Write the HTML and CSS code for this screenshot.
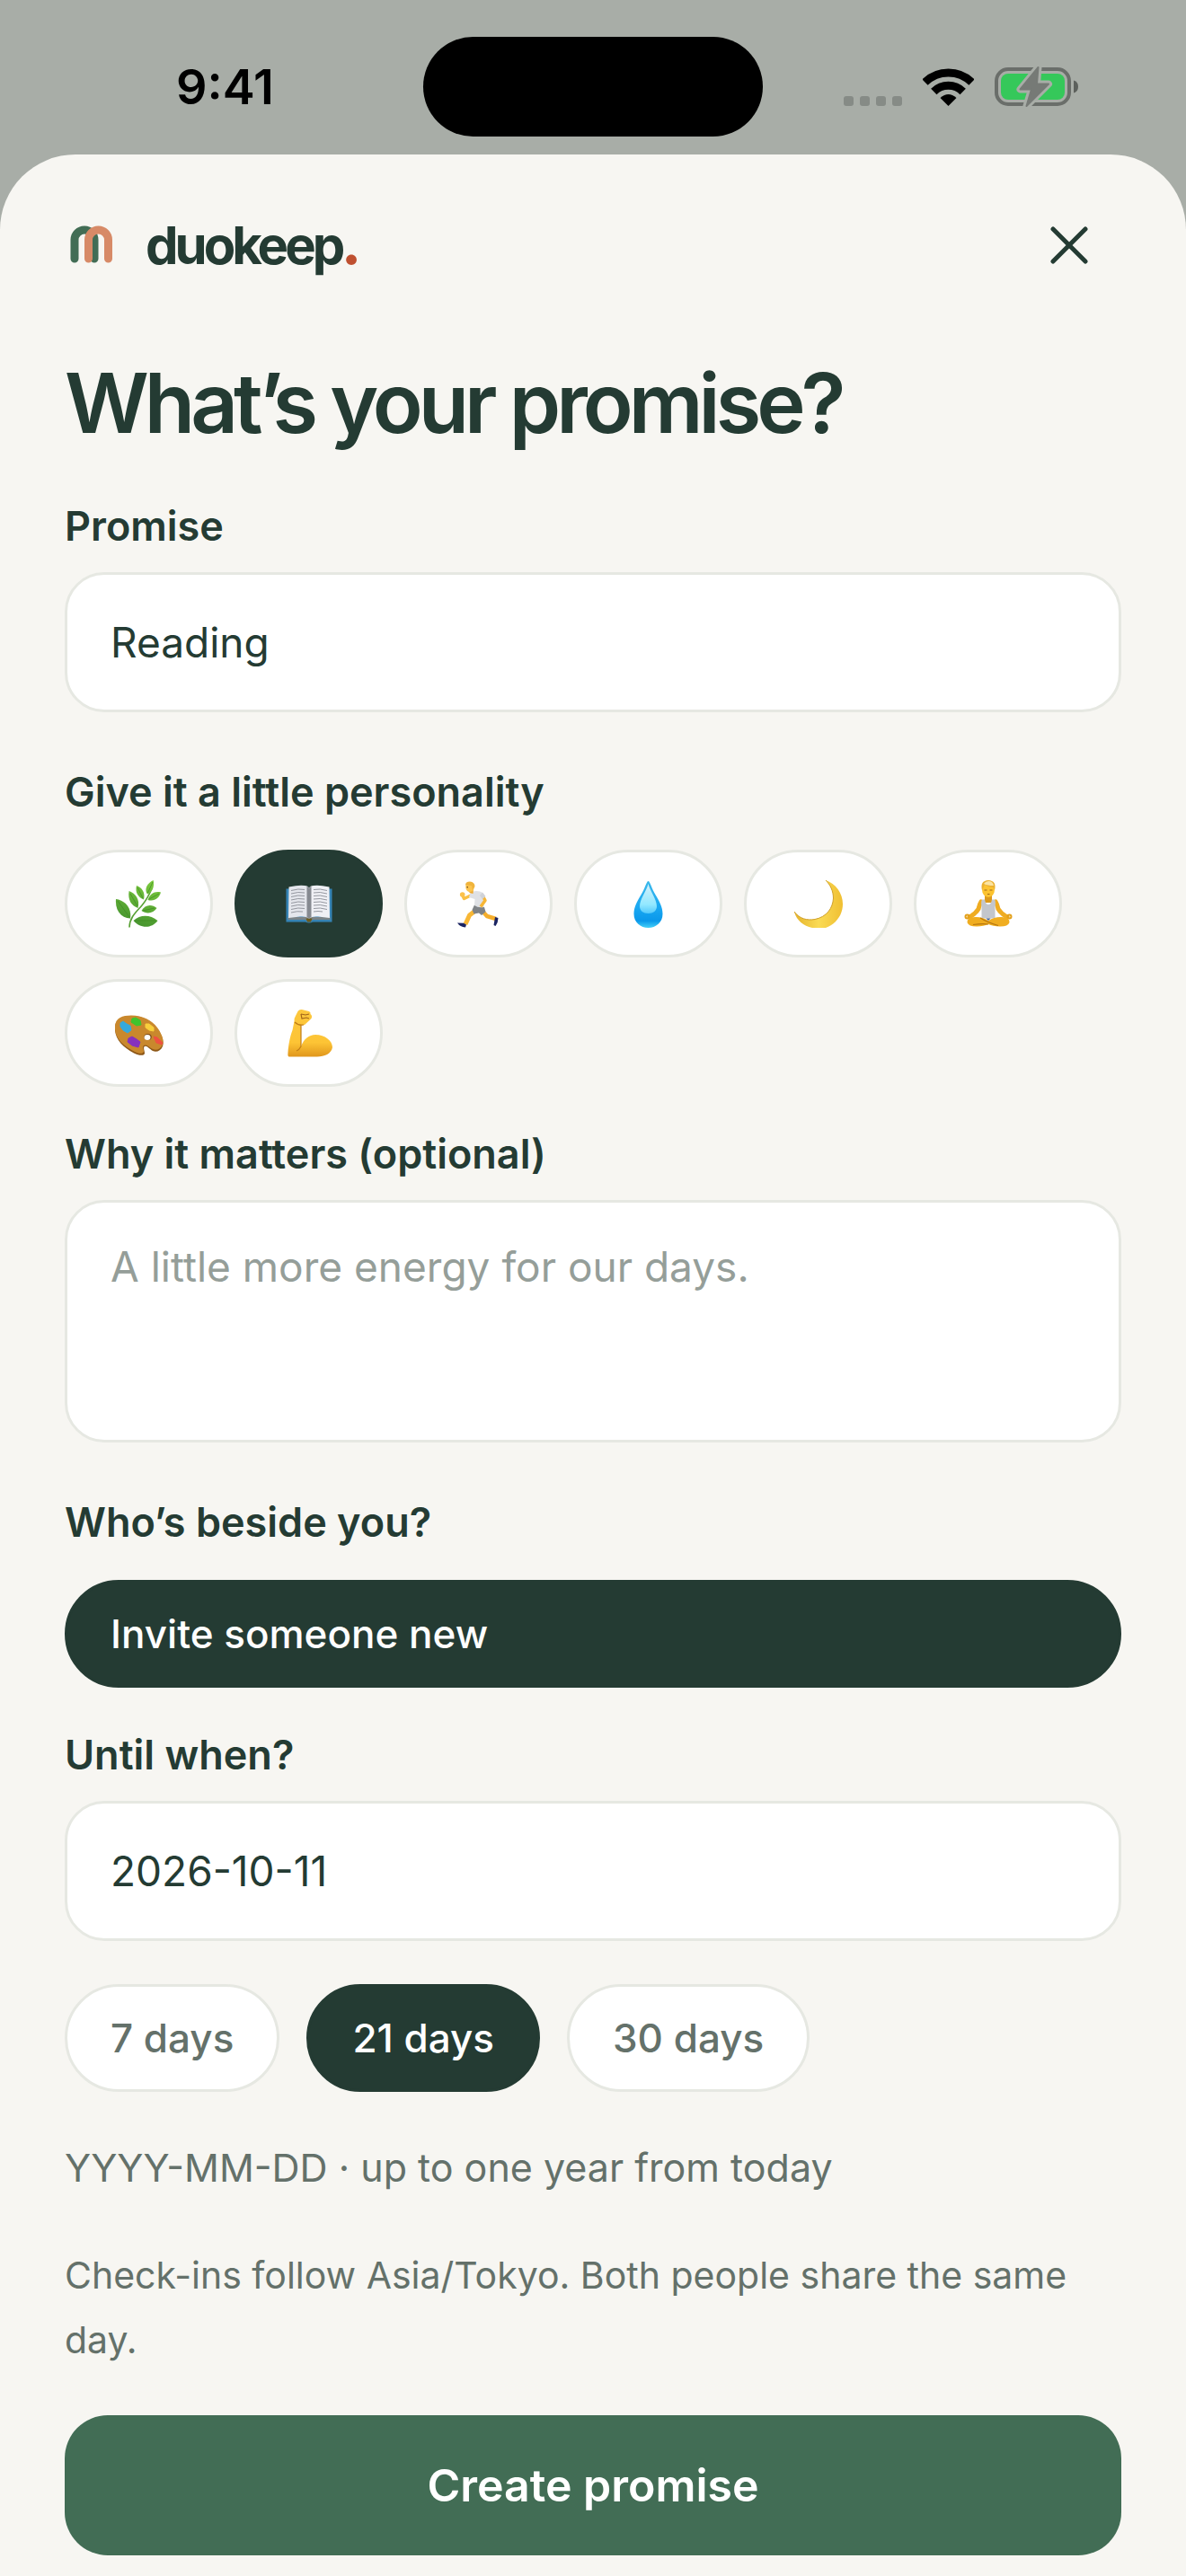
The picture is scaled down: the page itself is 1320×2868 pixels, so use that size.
FILE: index.html
```html
<!DOCTYPE html>
<html lang="en">
<head>
  <meta charset="UTF-8" />
  <meta name="viewport" content="width=device-width, initial-scale=1.0" />
  <title>duokeep</title>
  <link rel="stylesheet" href="styles.css">
</head>
<body>
  <div class="status">
    <span class="time">9:41</span>
    <span class="island"></span>
    <div class="signals">
      <svg class="dots" viewBox="0 0 66 48" aria-hidden="true">
        <rect x="0" y="34" width="11" height="11" rx="3" />
        <rect x="18" y="34" width="11" height="11" rx="3" />
        <rect x="36" y="34" width="11" height="11" rx="3" />
        <rect x="54" y="34" width="11" height="11" rx="3" />
      </svg>
      <svg class="wifi" viewBox="0 0 57 48" aria-hidden="true">
        <path d="M2.5 18.5A37.3 37.3 0 0 1 54.5 18.5" fill="none" stroke="#000" stroke-width="9" />
        <path d="M12.3 29A23 23 0 0 1 44.7 29" fill="none" stroke="#000" stroke-width="9" />
        <path d="M28.5 45L19.5 36Q28.5 28 37.5 36Z" />
      </svg>
      <svg class="battery" viewBox="0 0 94 50" aria-hidden="true">
        <rect x="2" y="5" width="81" height="39" rx="13" fill="none" stroke="#6a6e6a" stroke-width="4" />
        <rect x="7" y="10" width="71" height="29" rx="8" fill="#35c85a" />
        <path d="M88 17.5Q93 19 93 24.5T88 31.5Z" fill="#5c605c" />
        <path d="M48.5 3L28.5 27.5H41L35.5 46L60 21.5H47Z" fill="#a8ada7" stroke="#a8ada7" stroke-width="8" stroke-linejoin="round" />
        <path d="M48.5 3L28.5 27.5H41L35.5 46L60 21.5H47Z" fill="#767a76" stroke="#767a76" stroke-width="2" stroke-linejoin="round" />
      </svg>
    </div>
  </div>

  <main class="sheet">
    <header class="top">
      <div class="brand">
        <svg viewBox="0 0 60 60" aria-hidden="true">
          <path d="M11 45V24a11 11 0 0 1 22 0V45" stroke="#426d55" />
          <path d="M26.5 45V24a11 11 0 0 1 22 0V45" stroke="#d78a67" />
        </svg>
        <span class="name">duokeep<b>.</b></span>
      </div>
      <button class="close" type="button" aria-label="Close">
        <svg viewBox="0 0 42 42"><path d="M3 3L39 39M39 3L3 39" /></svg>
      </button>
    </header>

    <h1>What’s your promise?</h1>

    <form>
      <div class="field">
        <label for="promise">Promise</label>
        <input class="box" id="promise" type="text" value="Reading">
      </div>

      <fieldset class="group">
        <legend>Give it a little personality</legend>
        <div class="icons">
          <label class="chip icon">
            <input type="radio" name="icon" value="leaf" aria-label="Leaf">
            <svg viewBox="0 0 54 54">
              <path d="M16 53.5C16 42 25 35 30 29S37 20 41 10" fill="none" stroke="#58a034" stroke-width="1.6" />
              <g fill="url(#leafGreen)">
                <path d="M1 22C10 23 19 31 17 43.5C7 43 0 35 1 22Z" />
                <path d="M15.6 13C23 16 28 22 25.5 32C18 29 14 23 15.6 13Z" />
                <path d="M24 7C30 9 34 15 32 22.5C26 20 22 15 24 7Z" />
                <path d="M42.7 1C44 8 42 14 36 16.5C32 11 36 4 42.7 1Z" />
                <path d="M51 14.5C49 21 44 25 36.5 23C39 16 44 13 51 14.5Z" />
                <path d="M46.5 32C43 38 35 39 29.5 35C33 28 41 27 46.5 32Z" />
                <path d="M47.5 46C40 56 27 54 20.5 46C28 39 39 39 47.5 46Z" />
              </g>
              <g fill="none" stroke="#3f8a27" stroke-width="0.7">
                <path d="M3 24L16 42M17 16L25 30M25 9L31 21M42 3L36.5 15M49 16L38 22M44 32L31 35M45 46H22" />
              </g>
              <defs>
                <linearGradient id="leafGreen" gradientUnits="userSpaceOnUse" x1="40" y1="0" x2="22" y2="54">
                  <stop offset="0" stop-color="#7ccb3d" />
                  <stop offset="1" stop-color="#43912e" />
                </linearGradient>
              </defs>
            </svg>
          </label>
          <label class="chip icon">
            <input type="radio" name="icon" value="book" aria-label="Book" checked>
            <svg viewBox="0 0 54 54">
              <path d="M1.5 10.5H52.5V47.5H31Q27 49.5 23 47.5H1.5Z" fill="#3583b5" />
              <path d="M3.5 42H50.5V45H31Q27 48 23 45H3.5Z" fill="#7b8489" />
              <path d="M23.5 43.5H30.5L29 47.5H25Z" fill="#6b5b1e" />
              <path d="M4.5 8.5Q16 6 22 7Q26 7 27 10V43.5Q24 41 17 41.5L4 43Z" fill="#e4e6ec" />
              <path d="M49.5 8.5Q38 6 32 7Q28 7 27 10V43.5Q30 41 37 41.5L50 43Z" fill="#eff0f5" />
              <path d="M24.5 8Q27 8 27 11Q27 8 29.5 8V42L27 43.5L24.5 42Z" fill="#868a91" />
              <g fill="none" stroke="#94979f" stroke-width="1">
                <path d="M7 12.5Q15 10 22 11.5M7 16Q15 13.5 22 15M7 19.5Q15 17 22 18.5M7 23Q15 20.5 22 22M7 26.5Q15 24 22 25.5M7 30Q15 27.5 22 29M7 33.5Q15 31 22 32.5M7 37Q14 35 20 36" />
                <path d="M32 11.5Q39 10 47 12.5M32 15Q39 13.5 47 16M32 18.5Q39 17 47 19.5M32 22Q39 20.5 47 23M32 25.5Q39 24 47 26.5M32 29Q39 27.5 47 30M32 32.5Q39 31 47 33.5M32 36Q37 35 42 36" />
              </g>
            </svg>
          </label>
          <label class="chip icon">
            <input type="radio" name="icon" value="run" aria-label="Running">
            <svg viewBox="0 0 54 54">
              <path d="M31 35.5L36 41L46 44" fill="none" stroke="#f5ae2c" stroke-width="4.5" stroke-linejoin="round" />
              <path d="M23 35L16.5 40L12 50" fill="none" stroke="#f8b735" stroke-width="5" stroke-linejoin="round" />
              <path d="M3 48.5L10 48.8L13 50.5L12 53.5Q6 53 3 48.5Z" fill="#1b2462" />
              <path d="M45 42L48.5 43Q48.5 48 45.5 52L43.5 51Z" fill="#1b2462" />
              <path d="M20 17L10.5 21.5L8.5 17" fill="none" stroke="#f9bf42" stroke-width="3.5" stroke-linejoin="round" />
              <circle cx="8.7" cy="17" r="2.8" fill="#fbc14b" />
              <path d="M22 28.5L33 31L34.5 36L30 40L27 37.5L21.5 38.5L19.5 34Z" fill="#7f8387" />
              <path d="M17.5 15Q22 12 28 13.5Q33 15 33.5 19L32 24L32.5 31Q26 32 22 29L22.5 22L16 20Z" fill="#dfe1e5" />
              <path d="M31 18L34 23.5L29 30.5" fill="none" stroke="#f7b635" stroke-width="3.5" stroke-linejoin="round" />
              <path d="M31 14.5L34.5 19L31 22L28 18Z" fill="#d0d2d7" />
              <path d="M16 11L21 10.5L20.5 16L16.5 15Z" fill="#efa92f" />
              <ellipse cx="17" cy="8.5" rx="4.7" ry="5.5" fill="#fcc44f" />
              <path d="M12 6.5Q12 2.5 17 2.5Q22.500 3 22.500 8L20 12L19 7Z" fill="#f0b43c" />
              <circle cx="14.2" cy="8.7" r="0.8" fill="#5c3a14" />
            </svg>
          </label>
          <label class="chip icon">
            <input type="radio" name="icon" value="water" aria-label="Water">
            <svg viewBox="0 0 54 54">
              <defs>
                <linearGradient id="dropBlue" x1="0" y1="0" x2="0" y2="1">
                  <stop offset="0" stop-color="#3bb8ea" />
                  <stop offset="0.55" stop-color="#1ba9f2" />
                  <stop offset="0.85" stop-color="#0a98ea" />
                  <stop offset="1" stop-color="#45d1f8" />
                </linearGradient>
                <linearGradient id="dropShine" x1="0" y1="0" x2="0" y2="1">
                  <stop offset="0" stop-color="#d6f1fb" />
                  <stop offset="0.7" stop-color="#92e8ff" />
                  <stop offset="1" stop-color="#53c9fb" />
                </linearGradient>
              </defs>
              <path d="M26.5 2C28.5 2 30 10 35 18C39 25 42.5 31 42.5 38.5C42.5 48 35 54 26.5 54S10.5 48 10.5 38.5C10.5 31 14 25 18 18C23 10 24.5 2 26.5 2Z" fill="url(#dropBlue)" />
              <path d="M26.5 5C28 12 36 22 36 30C36 35 32 38 26.5 38S17 35 17 30C17 22 25 12 26.5 5Z" fill="url(#dropShine)" />
            </svg>
          </label>
          <label class="chip icon">
            <input type="radio" name="icon" value="moon" aria-label="Moon">
            <svg viewBox="0 0 54 54">
              <defs>
                <linearGradient id="moonGold" x1="0" y1="0" x2="1" y2="0">
                  <stop offset="0" stop-color="#e5b32b" />
                  <stop offset="0.5" stop-color="#fadb55" />
                  <stop offset="1" stop-color="#f0bf32" />
                </linearGradient>
              </defs>
              <path d="M35 1C46 5 54 15 54 27.5C54 40 46 50 35 54H20C10 52 2 45 0 36C6 44 14 46 23 44.5C36 42 43 32 43.5 21C43.5 13 40 6 35 1Z" fill="url(#moonGold)" />
              <path d="M0 36C6 44 14 46 23 44.5C36 42 43 32 43.5 21C43.5 13 40 6 35 1" fill="none" stroke="#cf9f29" stroke-width="1" />
            </svg>
          </label>
          <label class="chip icon">
            <input type="radio" name="icon" value="calm" aria-label="Meditation">
            <svg viewBox="0 0 54 54">
              <path d="M19 25Q17 28 16 33Q13 38 6 42M35 25Q37 28 38 33Q41 38 48 42" fill="none" stroke="#efac22" stroke-width="5" stroke-linecap="round" />
              <circle cx="3.5" cy="41.5" r="2" fill="none" stroke="#e3a01b" stroke-width="2" />
              <circle cx="50.5" cy="41.5" r="2" fill="none" stroke="#e3a01b" stroke-width="2" />
              <path d="M23 17H31V26H23Z" fill="#dc991b" />
              <path d="M20 22.500H23Q24 28 27 28T31 22.500H34Q35.500 25 34.500 31V43.500H19.500V31Q18.500 25 20 22.500Z" fill="#c3c6cc" />
              <path d="M3.500 48Q3 42 12 42Q20 41.500 27 46Q34 41.500 42 42Q51 42 50.500 48Q49 52.500 40 52.500Q32 52 27 50Q22 52 14 52.500Q5 52.500 3.500 48Z" fill="#f0ad20" />
              <path d="M18 43Q26 48 38 51.500M27 50Q20 49 10 50.500" fill="none" stroke="#b5750f" stroke-width="1.2" />
              <path d="M24.500 43.500H29.500L27 46Z" fill="#46659b" />
              <ellipse cx="27" cy="11.500" rx="7" ry="8.500" fill="#fcc32f" />
              <path d="M20 12Q17.500 1.500 27 1Q36.500 1.500 34 12L32.500 9L27 8L23 6L21.500 9Z" fill="#eab030" />
              <path d="M22 5Q24 2 28 2Q32 2.500 33 7Q26 7 22 5Z" fill="#fbe3a0" />
              <path d="M22.500 12H25.500M28.500 12H31.500M26 16.500H28.500" stroke="#a0661a" stroke-width="1" />
            </svg>
          </label>
          <label class="chip icon">
            <input type="radio" name="icon" value="art" aria-label="Art">
            <svg viewBox="0 0 54 54">
              <path d="M0 24C-1 12 7 8 18 8C31 8 41 14 47 22C52 29 55 36 53 42C51 47 46 49 42 47C38 45 36 41 33 42C31 43 33 47 33 50C32 53 26 52 21 49.5C9 43 1 35 0 24Z" fill="#8d5717" />
              <path d="M0 23C-1 11 7 7.5 18 7.5C31 7.5 41 13 47 21C52 28 55 35 53 40C51 45 46 47 42 45C38 43 35 39 32 41C30 43 32 45 32 48C30 51 26 50 21 47.5C9 41 1 34 0 23Z" fill="#c9882d" />
              <ellipse cx="36.5" cy="31.5" rx="4.2" ry="3.6" fill="#7b4a17" />
              <ellipse cx="36" cy="32" rx="3.5" ry="3" fill="#fff" />
              <path d="M6 16L9 14L13 17L17 19L18 24L14 27L9 24L6 20Z" fill="#35a9dc" stroke="#35a9dc" stroke-linejoin="round" />
              <path d="M19 11L23 10L28 13L29 18L24 19L18 15Z" fill="#3fc42d" stroke="#3fc42d" stroke-linejoin="round" />
              <path d="M34 17L38 17L43 21L43 25L38 24L34 21Z" fill="#f8cf3c" stroke="#f8cf3c" stroke-linejoin="round" />
              <path d="M43 31L47 32L53 38L52 40L46 38Z" fill="#ee5240" stroke="#ee5240" stroke-linejoin="round" />
              <path d="M15 33L19 31L24 34L28 37L26 43L19 41L14 37Z" fill="#8632bd" stroke="#8632bd" stroke-linejoin="round" />
            </svg>
          </label>
          <label class="chip icon">
            <input type="radio" name="icon" value="strength" aria-label="Strength">
            <svg viewBox="0 0 54 54">
              <defs>
                <linearGradient id="armGold" x1="0" y1="0" x2="0" y2="1">
                  <stop offset="0" stop-color="#fcc73d" />
                  <stop offset="0.7" stop-color="#fdc435" />
                  <stop offset="1" stop-color="#e0961c" />
                </linearGradient>
              </defs>
              <path d="M10.500 14Q10 11 12 8L14.500 3Q16 0.500 19 1L27 3Q29 4 28.500 6Q31 8 29.500 11L22 18H18V42C21 34 27 29 34 29C45 29 53 36 53 43C52 50 44 53.500 36 53.500H4.500Q3 53 3.500 49C4 40 6 30 8.500 24Z" fill="url(#armGold)" />
              <path d="M11 15Q15 19 21 18M18 18.500V42Q16 46 13 47" fill="none" stroke="#c07d16" stroke-width="1.2" />
              <path d="M18 6L23 7L27 6M18 6L19 11L24 10L27 11" fill="none" stroke="#a3661a" stroke-width="1.2" />
            </svg>
          </label>
        </div>
      </fieldset>

      <div class="field">
        <label for="why">Why it matters (optional)</label>
        <textarea class="box" id="why" placeholder="A little more energy for our days."></textarea>
      </div>

      <fieldset class="group">
        <legend>Who’s beside you?</legend>
        <button class="chip invite" type="button">Invite someone new</button>
      </fieldset>

      <div class="field until">
        <label for="until">Until when?</label>
        <input class="box" id="until" type="text" value="2026-10-11">
      </div>

      <div class="days">
        <label class="chip"><input type="radio" name="days" value="7">7 days</label>
        <label class="chip"><input type="radio" name="days" value="21" checked>21 days</label>
        <label class="chip"><input type="radio" name="days" value="30">30 days</label>
      </div>

      <p class="hint">YYYY-MM-DD · up to one year from today</p>
      <p class="note">Check-ins follow Asia/Tokyo. Both people share the same day.</p>

      <button class="submit" type="submit">Create promise</button>
    </form>
  </main>
</body>
</html>
```

FILE: styles.css
```css
* {
  box-sizing: border-box;
}

body {
  font-family: Inter, "Noto Sans", sans-serif;
  margin: 0;
  min-height: 100vh;
  display: flex;
  flex-direction: column;
  background: #a8ada7;
  color: #243b33;
}

/* status bar */
.status {
  display: grid;
  grid-template-columns: 1fr 378px 1fr;
  align-items: center;
  justify-items: center;
  padding: 41px 30px 20px;
}

.time {
  font-size: 54px;
  font-weight: 600;
  line-height: 60px;
  color: #000;
}

.island {
  width: 100%;
  height: 111px;
  border-radius: 56px;
  background: #000;
}

.signals {
  display: flex;
  align-items: center;
}

.dots {
  width: 66px;
  height: 48px;
  fill: #868b86;
  margin-right: 22px;
}

.wifi {
  width: 57px;
  height: 48px;
  margin-right: 23px;
}

.battery {
  width: 94px;
  height: 50px;
}

/* sheet */
.sheet {
  flex: 1;
  background: #f7f6f2;
  border-radius: 84px 84px 0 0;
  padding: 43px 72px 23px;
}

.top {
  display: flex;
  justify-content: space-between;
  align-items: center;
}

.brand {
  display: flex;
  align-items: center;
  gap: 30px;
}

.brand svg {
  width: 60px;
  height: 60px;
  fill: none;
  stroke-width: 9;
  stroke-linecap: round;
}

.name {
  font-size: 58px;
  font-weight: 700;
  line-height: 72px;
  letter-spacing: -4px;
}

.name b {
  color: #bf5030;
}

.close {
  width: 116px;
  height: 116px;
  padding: 0;
  border: none;
  background: none;
  display: grid;
  place-items: center;
  cursor: pointer;
}

.close svg {
  width: 42px;
  height: 42px;
  fill: none;
  stroke: #243b33;
  stroke-width: 5;
  stroke-linecap: round;
}

h1 {
  font-size: 92px;
  font-weight: 600;
  line-height: 110px;
  letter-spacing: -5px;
  margin: 63px 0 52px;
}

/* form */
.field label,
legend {
  display: block;
  padding: 0;
  font-size: 45px;
  font-weight: 600;
  line-height: 60px;
}

.field {
  margin-bottom: 59px;
}

.field label {
  margin-bottom: 21px;
}

.until {
  margin-bottom: 48px;
}

.group {
  border: none;
  margin: 0 0 45px;
  padding: 0;
  min-width: 0;
}

legend {
  margin-bottom: 34px;
}

.box {
  display: block;
  width: 100%;
  height: 156px;
  padding: 0 48px;
  border: 3px solid #e6e8e2;
  border-radius: 44px;
  background: #fff;
  color: #243b33;
  font-family: inherit;
  font-size: 46px;
  line-height: 66px;
  outline: none;
}

textarea.box {
  height: 270px;
  padding-top: 38px;
  resize: none;
}

.box::placeholder {
  color: #959e99;
  opacity: 1;
}

.icons {
  display: flex;
  flex-wrap: wrap;
  gap: 24px;
}

.days {
  display: flex;
  flex-wrap: wrap;
  gap: 30px;
}

.chip {
  display: flex;
  align-items: center;
  height: 120px;
  padding: 0 48px;
  border: 3px solid #e6e8e2;
  border-radius: 60px;
  background: #fff;
  color: #64716a;
  font-family: inherit;
  font-size: 44px;
  font-weight: 500;
  cursor: pointer;
}

.chip input {
  appearance: none;
  width: 0;
  height: 0;
  margin: 0;
}

.chip svg {
  width: 54px;
  height: 54px;
}

.icon {
  width: 165px;
  justify-content: center;
}

.chip:has(input:checked),
.invite {
  background: #243b33;
  border-color: #243b33;
  color: #fff;
}

.invite {
  width: 100%;
}

.hint {
  margin: 54px 0;
  font-size: 43px;
  line-height: 60px;
  color: #64716a;
}

.note {
  margin: 0 0 48px;
  font-size: 41px;
  line-height: 72px;
  color: #64716a;
}

.submit {
  display: block;
  width: 100%;
  height: 156px;
  border: none;
  border-radius: 48px;
  background: #426d55;
  color: #fff;
  font-family: inherit;
  font-size: 50px;
  font-weight: 600;
  cursor: pointer;
}
```
